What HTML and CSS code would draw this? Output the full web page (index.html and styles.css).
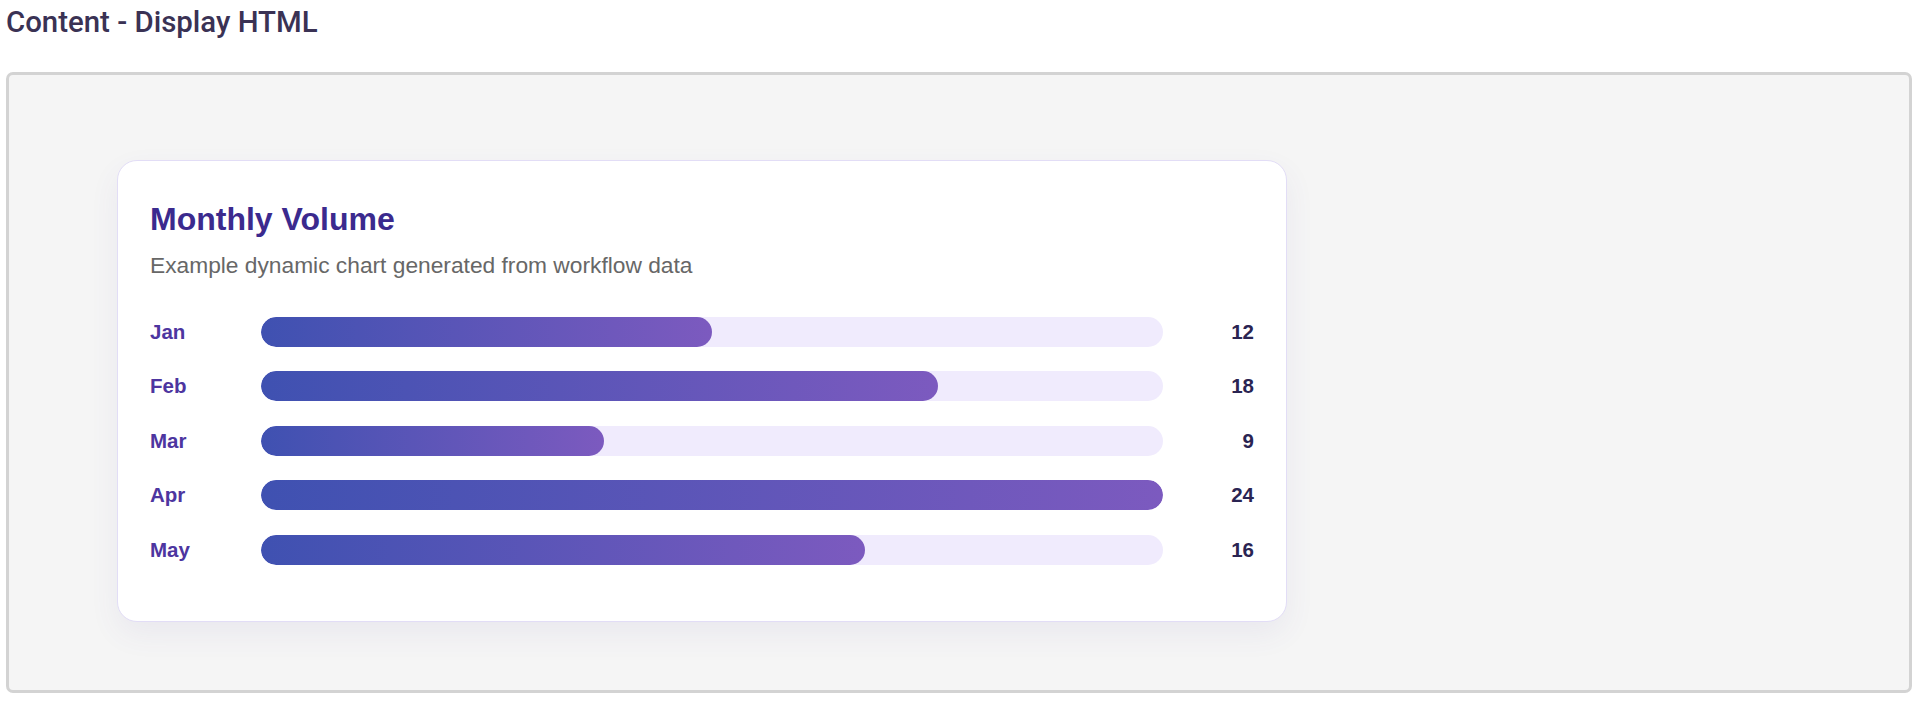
FILE: index.html
```html
<!DOCTYPE html>
<html lang="en">
<head>
<meta charset="utf-8">
<title>Content - Display HTML</title>
<link rel="stylesheet" href="styles.css">
</head>
<body>
  <h1 class="page-title">Content - Display HTML</h1>
  <div class="preview">
    <section class="card">
      <h2 class="card-title">Monthly Volume</h2>
      <p class="card-subtitle">Example dynamic chart generated from workflow data</p>
      <div class="chart">
        <div class="row">
          <span class="label">Jan</span>
          <div class="track"><div class="fill" style="width: 50%"></div></div>
          <span class="value">12</span>
        </div>
        <div class="row">
          <span class="label">Feb</span>
          <div class="track"><div class="fill" style="width: 75%"></div></div>
          <span class="value">18</span>
        </div>
        <div class="row">
          <span class="label">Mar</span>
          <div class="track"><div class="fill" style="width: 38%"></div></div>
          <span class="value">9</span>
        </div>
        <div class="row">
          <span class="label">Apr</span>
          <div class="track"><div class="fill" style="width: 100%"></div></div>
          <span class="value">24</span>
        </div>
        <div class="row">
          <span class="label">May</span>
          <div class="track"><div class="fill" style="width: 67%"></div></div>
          <span class="value">16</span>
        </div>
      </div>
    </section>
  </div>
</body>
</html>
```

FILE: styles.css
```css
html, body {
  margin: 0;
  padding: 0;
  background: #ffffff;
}

body {
  padding: 0 8px 0 6px;
  font-family: "Liberation Sans", Arial, sans-serif;
}

.page-title {
  margin: 0 0 30px;
  padding-top: 2px;
  font-family: Roboto, "Noto Sans", sans-serif;
  font-weight: 500;
  font-size: 29.4px;
  line-height: 40px;
  color: #3a3254;
}

.preview {
  background: #f5f5f5;
  border: 3px solid #d3d3d3;
  border-radius: 7px;
  padding: 85px 0 68px 108px;
}

.card {
  width: 1170px;
  box-sizing: border-box;
  background: #ffffff;
  border: 1px solid #e2ddf6;
  border-radius: 20px;
  padding: 32px;
  box-shadow: 0 12px 30px rgba(80, 64, 160, 0.07);
}

.card-title {
  margin: 6px 0 0;
  font-size: 32px;
  line-height: 40px;
  font-weight: 700;
  color: #3b2a8e;
}

.card-subtitle {
  margin: 11px 0 0;
  font-size: 22.75px;
  line-height: 30px;
  color: #676767;
}

.chart {
  margin: 36.5px 0 24px;
  display: flex;
  flex-direction: column;
  gap: 24.6px;
}

.row {
  display: grid;
  grid-template-columns: 95px 1fr 75px;
  column-gap: 16px;
  align-items: center;
  height: 30px;
}

.label {
  font-size: 20.5px;
  font-weight: 700;
  color: #4d35a0;
}

.track {
  height: 30px;
  border-radius: 15px;
  background: #f0ebfd;
  overflow: hidden;
}

.fill {
  height: 100%;
  border-radius: 15px;
  background: linear-gradient(90deg, #3f51b1, #7c5abf);
}

.value {
  text-align: right;
  font-size: 20.5px;
  font-weight: 700;
  color: #2a2452;
}
```
